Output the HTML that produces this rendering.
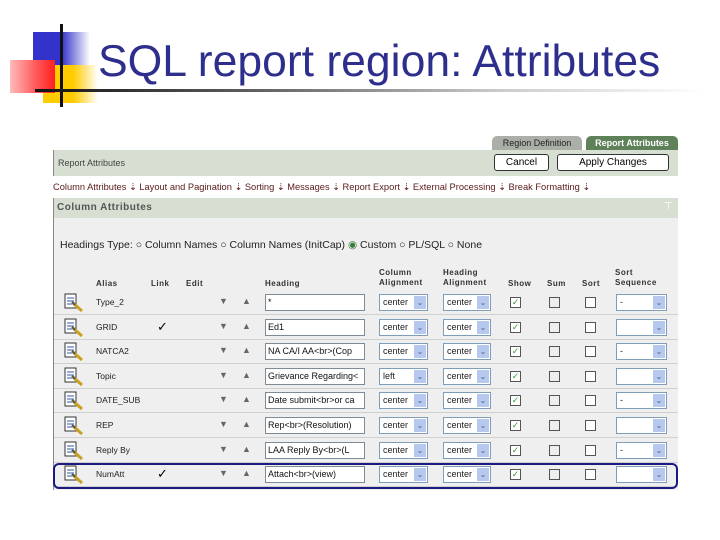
<!DOCTYPE html>
<html><head><meta charset="utf-8"><style>
*{margin:0;padding:0;box-sizing:border-box}
body{width:720px;height:540px;background:#fff;position:relative;overflow:hidden;font-family:"Liberation Sans",sans-serif}
.a{position:absolute}
.s{font-size:9px;color:#222;white-space:nowrap}
.h{font-size:8px;font-weight:bold;color:#333;letter-spacing:.5px;line-height:10px}
.inp{position:absolute;height:17px;background:#fff;border:1px solid #7f8a99;font-size:9px;line-height:15px;padding-left:2px;overflow:hidden;white-space:nowrap;color:#111}
.sel{position:absolute;height:17px;background:#fff;border:1px solid #7f9db9;font-size:9px;line-height:15px;padding-left:3px;color:#222}
.sel b{position:absolute;right:1px;top:1px;width:12px;height:13px;background:#b7c8ef;color:#4d6185;font-size:8px;line-height:13px;text-align:center;font-weight:normal}
.cb{position:absolute;width:11px;height:11px;border:1px solid #555;background:#fff}
.cb.g{border-color:#555;background:#eee}
</style></head><body>
<!-- logo -->
<div class="a" style="left:33px;top:32px;width:57px;height:33px;background:linear-gradient(90deg,#3333cc 0,#3333cc 50%,#fff 100%)"></div>
<div class="a" style="left:43px;top:65px;width:55px;height:38px;background:linear-gradient(90deg,#ffcc00 0,#ffcc00 55%,#fff 100%)"></div>
<div class="a" style="left:10px;top:60px;width:45px;height:33px;background:linear-gradient(90deg,#ffbbbb 0,#ff5555 60%,#ff2020 100%)"></div>
<div class="a" style="left:60px;top:24px;width:3px;height:83px;background:#111"></div>
<div class="a" style="left:35px;top:89px;width:670px;height:3px;background:linear-gradient(90deg,#111 0,#666 35%,#ccc 70%,#fff 100%)"></div>
<div class="a" style="left:98px;top:36px;font-size:44.5px;color:#2e2e8c;line-height:52px;white-space:nowrap">SQL report region: Attributes</div>

<!-- tabs -->
<div class="a" style="left:492px;top:136px;width:90px;height:14px;background:#aab0a8;border-radius:5px 5px 0 0;font-size:9px;color:#222;text-align:center;line-height:14px">Region Definition</div>
<div class="a" style="left:586px;top:136px;width:92px;height:14px;background:#5f8159;border-radius:5px 5px 0 0;font-size:9px;color:#fff;font-weight:bold;text-align:center;line-height:14px">Report Attributes</div>
<!-- header bar -->
<div class="a" style="left:53px;top:150px;width:625px;height:26px;background:#d7dfd3;border-left:1px solid #888"></div>
<div class="a s" style="left:58px;top:158px;color:#444">Report Attributes</div>
<div class="a" style="left:494px;top:154px;width:55px;height:17px;background:#fff;border:1px solid #333;border-radius:3px;font-size:10px;text-align:center;line-height:15px">Cancel</div>
<div class="a" style="left:557px;top:154px;width:112px;height:17px;background:#fff;border:1px solid #333;border-radius:3px;font-size:10px;text-align:center;line-height:15px">Apply Changes</div>
<div class="a s" style="left:53px;top:182px;color:#5a1a1a;font-size:9.3px">Column Attributes ⇣  Layout and Pagination ⇣  Sorting ⇣  Messages ⇣  Report Export ⇣  External Processing ⇣  Break Formatting ⇣</div>
<!-- column attributes -->
<div class="a" style="left:53px;top:198px;width:625px;height:20px;background:#d7dfd3;border-left:1px solid #888"></div>
<div class="a" style="left:57px;top:202px;font-size:10px;font-weight:bold;color:#555;letter-spacing:.5px">Column Attributes</div>
<div class="a" style="left:664px;top:201px;font-size:10px;color:#fff">⊤</div>
<div class="a" style="left:53px;top:218px;width:625px;height:272px;background:#efefef;border-left:1px solid #888"></div>
<div class="a s" style="left:60px;top:239px;font-size:10.5px">Headings Type: ○ Column Names ○ Column Names (InitCap) <span style="color:#3a7a3a">◉</span> Custom ○ PL/SQL ○ None</div>
<!-- headers -->
<div class="a h" style="left:96px;top:279px">Alias</div>
<div class="a h" style="left:151px;top:279px">Link</div>
<div class="a h" style="left:186px;top:279px">Edit</div>
<div class="a h" style="left:265px;top:279px">Heading</div>
<div class="a h" style="left:379px;top:268px">Column<br>Alignment</div>
<div class="a h" style="left:443px;top:268px">Heading<br>Alignment</div>
<div class="a h" style="left:508px;top:279px">Show</div>
<div class="a h" style="left:547px;top:279px">Sum</div>
<div class="a h" style="left:582px;top:279px">Sort</div>
<div class="a h" style="left:615px;top:268px">Sort<br>Sequence</div>
<div id="rows"></div>
<script>
var d=[["Type_2","","*","center","-"],["GRID","✓","Ed1","center",""],["NATCA2","","NA CA/I AA&lt;br&gt;(Cop","center","-"],["Topic","","Grievance Regarding&lt;","left",""],["DATE_SUB","","Date submit&lt;br&gt;or ca","center","-"],["REP","","Rep&lt;br&gt;(Resolution)","center",""],["Reply By","","LAA Reply By&lt;br&gt;(L","center","-"],["NumAtt","✓","Attach&lt;br&gt;(view)","center",""]];
var h="";
for(var i=0;i<8;i++){var y=290+i*24.6,r=d[i];
h+='<div class="a" style="left:54px;top:'+(y+24)+'px;width:624px;height:1px;background:#d0d0d0"></div>';
h+='<svg class="a" style="left:64px;top:'+(y+3)+'px" width="22" height="20"><rect x="1" y="1" width="11" height="14" fill="#fff" stroke="#333"/><path d="M3 5h7M3 8h7M3 11h5" stroke="#3355aa"/><path d="M9 10l9 8" stroke="#c9a020" stroke-width="3"/><path d="M8 9l3 3" stroke="#555" stroke-width="2"/></svg>';
h+='<div class="a s" style="left:96px;top:'+(y+7)+'px;font-size:8.5px">'+r[0]+'</div>';
if(r[1])h+='<div class="a" style="left:157px;top:'+(y+4)+'px;font-size:13px">✓</div>';
h+='<div class="a" style="left:219px;top:'+(y+6)+'px;font-size:9px;color:#666">▼</div><div class="a" style="left:242px;top:'+(y+6)+'px;font-size:9px;color:#666">▲</div>';
h+='<div class="inp" style="left:265px;top:'+(y+4)+'px;width:100px">'+r[2]+'</div>';
h+='<div class="sel" style="left:379px;top:'+(y+4)+'px;width:49px">'+r[3]+'<b>⌄</b></div>';
h+='<div class="sel" style="left:443px;top:'+(y+4)+'px;width:48px">center<b>⌄</b></div>';
h+='<div class="cb" style="left:510px;top:'+(y+7)+'px;color:#3a9a3a;font-size:9px;line-height:9px;text-align:center">✓</div>';
h+='<div class="cb g" style="left:549px;top:'+(y+7)+'px"></div><div class="cb g" style="left:585px;top:'+(y+7)+'px;background:#fff"></div>';
h+='<div class="sel" style="left:616px;top:'+(y+4)+'px;width:51px">'+r[4]+'<b>⌄</b></div>';}
h+='<div class="a" style="left:53px;top:463px;width:625px;height:26px;border:2px solid #1a1a80;border-radius:6px"></div>';
document.getElementById("rows").innerHTML=h;
</script>
</body></html>
